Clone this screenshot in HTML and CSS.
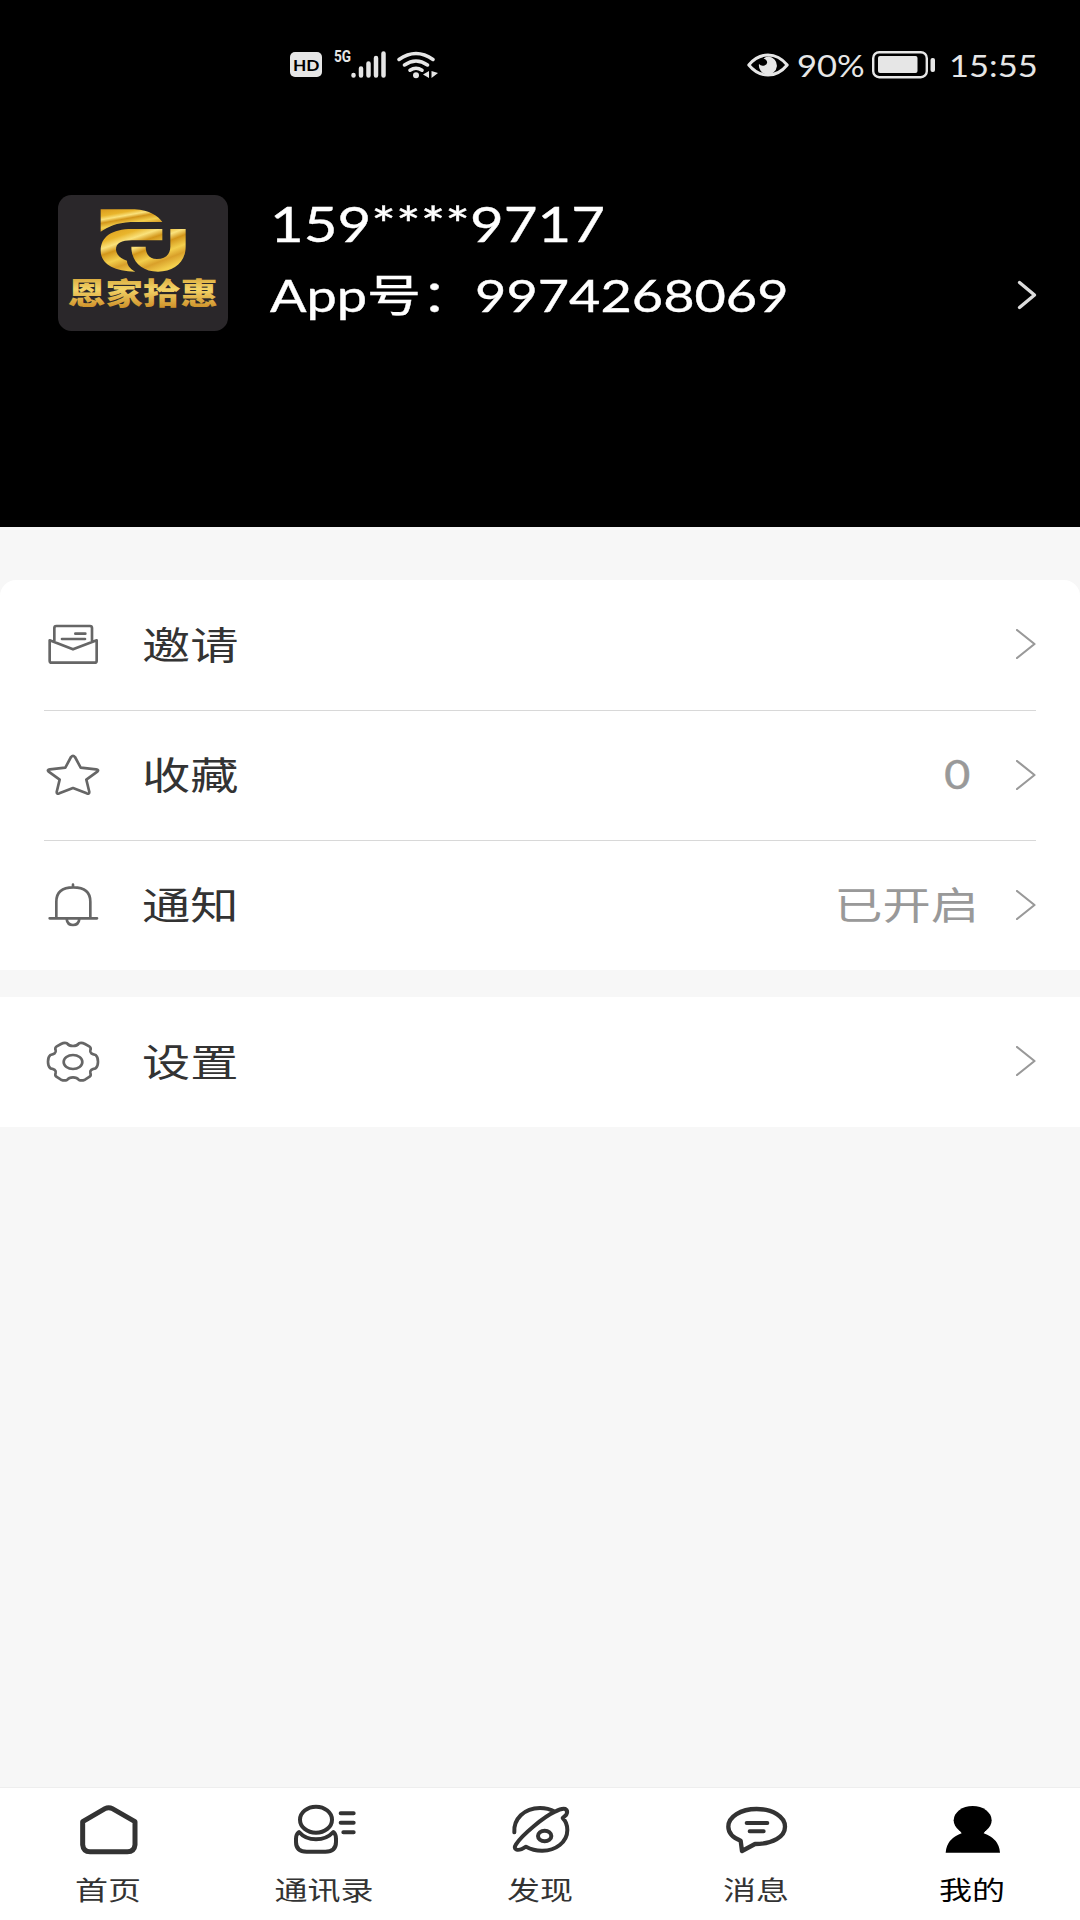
FILE: index.html
```html
<!DOCTYPE html>
<html lang="zh-CN">
<head>
    <meta charset="UTF-8">
    <meta name="viewport" content="width=device-width, initial-scale=1.0">
    <title>我的</title>
    <link rel="stylesheet" href="styles.css">
</head>
<body>
    <div class="page">
        <header class="header">
            <div class="status-bar">
                <div class="status-left">
                    <span class="hd"><span>HD</span></span>
                    <span class="net">5G</span>
                    <svg class="signal" viewBox="0 0 36 28">
                        <path d="M2.5 24V24.5M10 17.500V24.500M17.500 12.500V24.500M25 7V24.500M32.500 2.500V24.500"/>
                    </svg>
                    <svg class="wifi" viewBox="0 0 42 28">
                        <path d="M2 8.500Q19 -3.500 36 8.500M7.500 14Q19 6 30.500 14M13 19.200Q19 15.200 25 19.200"/>
                        <circle cx="19" cy="24.200" r="3"/>
                        <path class="solid" d="M32 20V27L26 23.500ZM34.500 20L41 22L34.500 27Z"/>
                    </svg>
                </div>
                <div class="status-right">
                    <svg class="eye" viewBox="0 0 42 24">
                        <path d="M1.800 12Q10 2 21 2T40.200 12Q32 22 21 22T1.800 12Z"/>
                        <path class="solid" d="M21.500 3.500A9 9 0 1 1 12 11Q14 13.500 17.500 12.500Q21.500 10.500 19.500 7.500Q18.500 6 16.500 5.500Q19 3.500 21.500 3.500Z"/>
                    </svg>
                    <span class="battery-text">90%</span>
                    <svg class="battery" viewBox="0 0 64 28">
                        <rect x="1.200" y="1.200" width="53.600" height="25" rx="6"/>
                        <rect class="solid" x="6" y="5" width="39.500" height="17" rx="2"/>
                        <rect class="solid" x="58.500" y="7" width="4.500" height="14" rx="2"/>
                    </svg>
                    <span class="time">15:55</span>
                </div>
            </div>

            <div class="profile">
                <svg class="avatar" viewBox="0 0 510 408">
                    <defs>
                        <linearGradient id="gold" x1="0" y1="0" x2=".5" y2="1">
                            <stop offset="0" stop-color="#d99a1c"/>
                            <stop offset=".25" stop-color="#e9b52c"/>
                            <stop offset=".38" stop-color="#fae27c"/>
                            <stop offset=".5" stop-color="#d3961a"/>
                            <stop offset=".68" stop-color="#f3cf4d"/>
                            <stop offset=".82" stop-color="#d9a02a"/>
                            <stop offset="1" stop-color="#f3cf4d"/>
                        </linearGradient>
                        <linearGradient id="gold-text" x1="0" y1="0" x2="0" y2="1">
                            <stop offset="0" stop-color="#c98f22"/>
                            <stop offset=".45" stop-color="#f3d468"/>
                            <stop offset="1" stop-color="#c5801a"/>
                        </linearGradient>
                    </defs>
                    <rect width="510" height="408" rx="40" fill="#2a272a"/>
                    <g fill="url(#gold)">
                        <path d="M128 43H230C275 46 300 63 313 81H218C176 83 150 96 128 110Z"/>
                        <path d="M313 102H222C162 102 128 125 128 167C128 205 165 229 232 230C214 220 207 208 207 197C188 192 174 178 174 163C174 145 190 136 222 136H313Z"/>
                        <path d="M220 155H263C263 178 275 192 297 192C322 192 337 178 337 155V102H383V155C383 202 347 230 300 230C250 230 220 198 220 155Z"/>
                    </g>
                    <text class="avatar-text" x="30" y="328" textLength="450" lengthAdjust="spacingAndGlyphs" fill="url(#gold-text)">恩家拾惠</text>
                </svg>
                <div class="profile-info">
                    <div class="phone"><span>159****9717</span></div>
                    <div class="account"><span>App号：9974268069</span></div>
                </div>
                <svg class="arrow arrow-light" viewBox="0 0 20 30">
                    <path d="M2.500 2.500L17.500 15L2.500 27.500"/>
                </svg>
            </div>
        </header>

        <main class="content">
            <section class="menu menu-main">
                <div class="row">
                    <svg class="icon" viewBox="0 0 180 144">
                        <path d="M34 62V21Q34 15 40 15H141Q147 15 147 21V62M20 58V119Q20 125 26 125H155Q161 125 161 119V58L90 85ZM97 38H127M57 54H126"/>
                    </svg>
                    <span class="label">邀请</span>
                    <svg class="arrow" viewBox="0 0 20 30"><path d="M1 1L18.500 15L1 29"/></svg>
                </div>
                <div class="row">
                    <svg class="icon" viewBox="0 0 180 144">
                        <path d="M84 18Q90 11 96 18L113 50L159 55Q169 57 163 62L130 86L139 123Q139 131 131 127L90 111L49 127Q41 131 41 123L50 86L17 62Q11 57 21 55L67 50Z"/>
                    </svg>
                    <span class="label">收藏</span>
                    <span class="value count">0</span>
                    <svg class="arrow" viewBox="0 0 20 30"><path d="M1 1L18.500 15L1 29"/></svg>
                </div>
                <div class="row">
                    <svg class="icon" viewBox="0 0 180 144">
                        <path d="M40 112V62Q40 19 91 19T142 62V112M20 112H162M90 11V18M71 114Q73 132 90 132T109 114"/>
                    </svg>
                    <span class="label">通知</span>
                    <span class="value">已开启</span>
                    <svg class="arrow" viewBox="0 0 20 30"><path d="M1 1L18.500 15L1 29"/></svg>
                </div>
            </section>

            <section class="menu">
                <div class="row">
                    <svg class="icon" viewBox="0 0 180 144">
                        <path d="M72 16Q78 24 90 24T108 16Q116 13 126 18L140 26Q145 30 142 37C140 45 147 49 158 51Q165 57 165 71T158 91C147 93 140 97 142 105Q145 112 140 116L126 125Q116 129 108 126Q102 118 90 118T72 126Q64 129 54 125L40 116Q35 112 38 105C40 97 33 93 22 91Q15 85 15 71T22 51C33 49 40 45 38 37Q35 30 40 26L54 18Q64 13 72 16Z"/>
                        <ellipse cx="90" cy="72" rx="28" ry="21"/>
                    </svg>
                    <span class="label">设置</span>
                    <svg class="arrow" viewBox="0 0 20 30"><path d="M1 1L18.500 15L1 29"/></svg>
                </div>
            </section>
        </main>

        <nav class="tab-bar">
            <div class="tab">
                <svg class="tab-icon home" viewBox="0 0 216 162">
                    <path d="M32 59L99 20Q110 14 121 20L189 59V128Q187 149 166 149H54Q34 149 32 128Z"/>
                </svg>
                <span>首页</span>
            </div>
            <div class="tab">
                <svg class="tab-icon" viewBox="0 0 216 162">
                    <ellipse cx="84" cy="53" rx="48" ry="39"/>
                    <path d="M33 90Q24 97 24 110V120Q24 149 56 149H112Q144 149 144 120V110Q144 97 136 90Q116 112 84 112T33 90ZM158 34H197M158 62H197M166 91H197"/>
                </svg>
                <span>通讯录</span>
            </div>
            <div class="tab">
                <svg class="tab-icon" viewBox="0 0 216 162">
                    <path d="M31 91C28 52 60 18 108 18Q132 18 153 29M36 127C55 98 120 44 153 29Q173 18 184 21Q193 26 187 38L176 48Q190 62 190 84C190 120 155 147 113 146Q88 146 66 134Q48 146 38 143Q28 139 36 127Z"/>
                    <ellipse cx="122" cy="102" rx="20" ry="16"/>
                </svg>
                <span>发现</span>
            </div>
            <div class="tab">
                <svg class="tab-icon" viewBox="0 0 216 162">
                    <path class="bubble" d="M62 116Q25 101 25 74C25 44 62 21 110 21S195 44 195 74S158 126 105 126L66 147Z"/>
                    <path d="M80 63H142M89 88H131"/>
                </svg>
                <span>消息</span>
            </div>
            <div class="tab active">
                <svg class="tab-icon" viewBox="0 0 216 162">
                    <ellipse cx="110" cy="55" rx="57" ry="43"/>
                    <path d="M29 152Q32 110 77 94L70 84H150L143 94Q189 110 192 152Z"/>
                </svg>
                <span>我的</span>
            </div>
        </nav>
    </div>
</body>
</html>
```

FILE: styles.css
```css
* {
    box-sizing: border-box;
}

body {
    margin: 0;
    font-family: Lato, "Noto Sans CJK SC", sans-serif;
    background-color: #f7f7f7;
    color: #333;
}

svg {
    display: block;
    flex: none;
    fill: none;
    stroke-linecap: round;
    stroke-linejoin: round;
}

.page {
    display: flex;
    flex-direction: column;
    height: 1920px;
    overflow: hidden;
}

/* header */
.header {
    height: 527px;
    background-color: #000;
    color: #fff;
}

.status-bar {
    display: flex;
    justify-content: space-between;
    height: 129px;
    padding: 0 43px 0 290px;
    color: #e6e6e6;
}

.status-left, .status-right {
    display: flex;
    align-items: center;
}

.status-bar svg {
    stroke: #e6e6e6;
}

.status-bar .solid {
    fill: #e6e6e6;
    stroke: none;
}

.hd {
    width: 32px;
    height: 25px;
    border-radius: 5px;
    background-color: #e6e6e6;
    color: #000;
    font: bold 16px/26px Lato, sans-serif;
    text-align: center;
}

.hd span {
    display: inline-block;
    transform: scaleX(1.08);
}

.net {
    width: 17px;
    margin: 0 0 16px 12px;
    font: bold 16px/16px Roboto, sans-serif;
    transform: scaleX(.85);
    transform-origin: left;
}

.signal {
    width: 36px;
    height: 28px;
    stroke-width: 4.5;
}

.wifi {
    width: 42px;
    height: 28px;
    margin-left: 10px;
    stroke-width: 3.5;
}

.wifi circle {
    fill: #e6e6e6;
    stroke: none;
}

.eye {
    width: 42px;
    height: 24px;
    margin-right: 8px;
    stroke-width: 3;
}

.battery {
    width: 64px;
    height: 28px;
    stroke-width: 2.4;
}

.battery-text, .time {
    font-size: 30px;
    line-height: 36px;
    transform-origin: left;
}

.battery-text {
    width: 75px;
    transform: scaleX(1.15);
}

.time {
    width: 88px;
    margin-left: 13px;
    transform: scaleX(1.15);
}

.profile {
    display: flex;
    align-items: center;
    padding: 66px 43px 0 58px;
}

.avatar {
    width: 170px;
    height: 136px;
}

.avatar-text {
    font-family: "Noto Sans CJK SC", sans-serif;
    font-size: 88px;
    font-weight: 900;
}

.profile-info {
    flex: 1;
    margin: -9px 0 0 42px;
    white-space: nowrap;
    -webkit-text-stroke: .4px #fff;
}

.phone, .account {
    height: 72px;
    line-height: 72px;
}

.phone span, .account span {
    display: inline-block;
    transform-origin: left;
}

.phone {
    font-size: 49px;
}

.phone span {
    transform: scaleX(1.187);
}

.account {
    font-size: 44px;
}

.account span {
    transform: scaleX(1.228);
}

.arrow {
    width: 20px;
    height: 30px;
    margin-top: -2px;
    stroke: #999;
    stroke-width: 2.2;
}

.arrow-light {
    margin-top: 64px;
    stroke: #ddd;
    stroke-width: 3.4;
}

/* menu */
.content {
    flex: 1;
    padding-top: 53px;
}

.menu {
    margin-bottom: 27px;
    padding: 0 44px;
    background-color: #fff;
}

.menu-main {
    border-radius: 16px 16px 0 0;
}

.row {
    display: flex;
    align-items: center;
    height: 130px;
}

.row + .row {
    border-top: 1px solid #d8d8d8;
}

.icon {
    width: 60px;
    height: 48px;
    margin: -1px 0 0 -1px;
    stroke: #666;
    stroke-width: 8;
}

.label, .value {
    margin-top: -3px;
    font-size: 38px;
    line-height: 56px;
}

.label {
    flex: 1;
    margin-left: 39px;
    transform: scaleX(1.27);
    transform-origin: left;
}

.value {
    margin-right: 37px;
    color: #999;
    transform: scaleX(1.27);
    transform-origin: right;
}

.count {
    margin-right: 46px;
    font-size: 40px;
    transform: scaleX(1.12);
    -webkit-text-stroke: .5px #999;
}

/* tab bar */
.tab-bar {
    display: flex;
    height: 133px;
    border-top: 1px solid #eee;
    background-color: #fff;
}

.tab {
    flex: 1;
    display: flex;
    flex-direction: column;
    align-items: center;
    padding-top: 14px;
}

.tab-icon {
    width: 72px;
    height: 54px;
    stroke: #333;
    stroke-width: 12;
}

.home {
    stroke-width: 15;
}

.bubble {
    stroke-width: 13;
}

.tab span {
    margin-top: 15px;
    font-size: 26px;
    line-height: 38px;
    transform: scaleX(1.27);
}

.active {
    color: #000;
}

.active .tab-icon {
    fill: #000;
    stroke: none;
}
```
